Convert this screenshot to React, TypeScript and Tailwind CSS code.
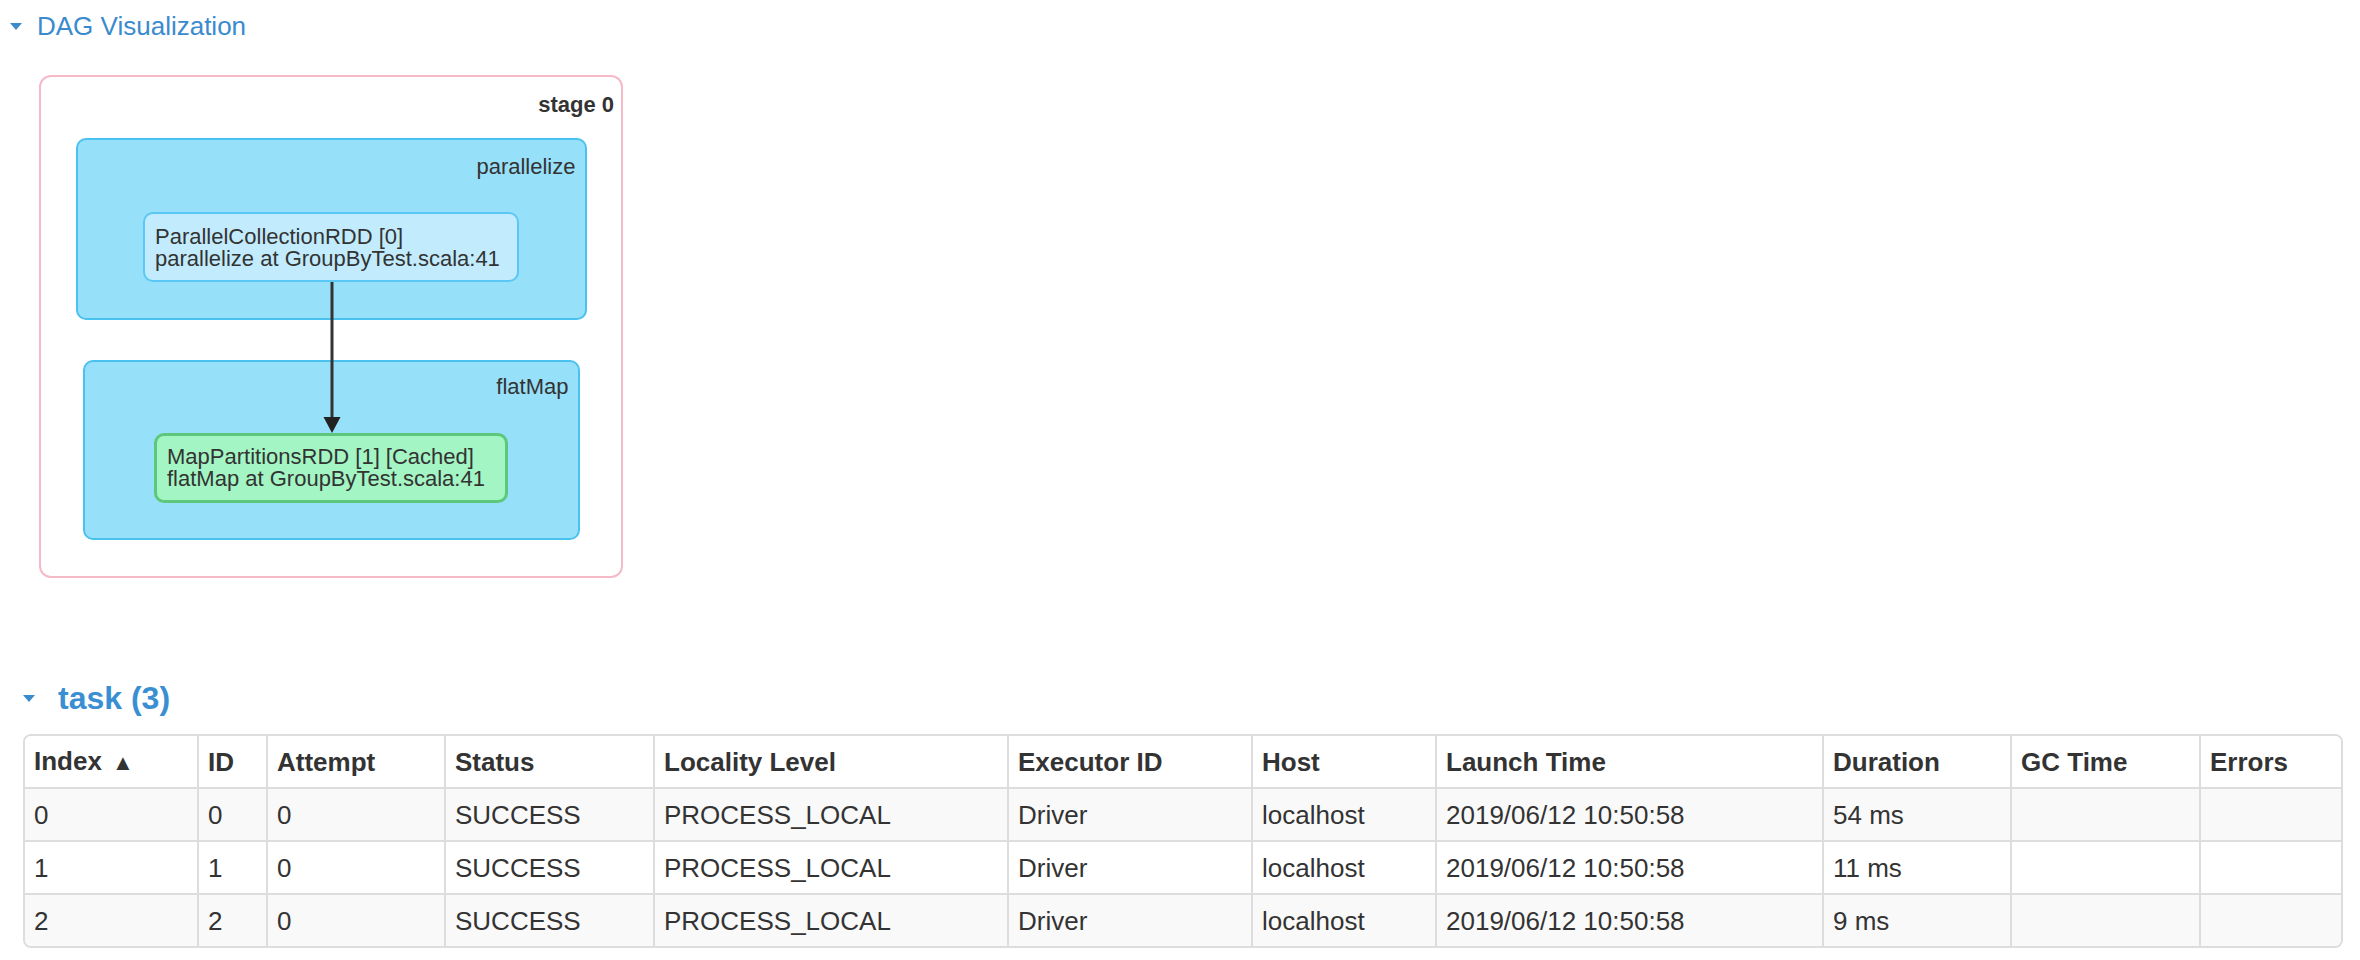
import React from "react";

const headers = [
  "Index",
  "ID",
  "Attempt",
  "Status",
  "Locality Level",
  "Executor ID",
  "Host",
  "Launch Time",
  "Duration",
  "GC Time",
  "Errors",
];

const colWidths = [
  "w-[172px]",
  "w-[69px]",
  "w-[178px]",
  "w-[209px]",
  "w-[354px]",
  "w-[244px]",
  "w-[184px]",
  "w-[387px]",
  "w-[188px]",
  "w-[189px]",
  "w-[142px]",
];

const rows = [
  ["0", "0", "0", "SUCCESS", "PROCESS_LOCAL", "Driver", "localhost", "2019/06/12 10:50:58", "54 ms", "", ""],
  ["1", "1", "0", "SUCCESS", "PROCESS_LOCAL", "Driver", "localhost", "2019/06/12 10:50:58", "11 ms", "", ""],
  ["2", "2", "0", "SUCCESS", "PROCESS_LOCAL", "Driver", "localhost", "2019/06/12 10:50:58", "9 ms", "", ""],
];

function Caret() {
  return (
    <span className="inline-block h-0 w-0 border-l-[6px] border-r-[6px] border-t-[7px] border-l-transparent border-r-transparent border-t-[#3a8bcd]" />
  );
}

export default function App() {
  return (
    <div className="min-h-[960px] w-[2360px] bg-white font-['Liberation_Sans',Arial,sans-serif] text-[#333]">
      {/* DAG heading */}
      <div className="pt-[8px]">
        <div className="flex h-[37px] items-center">
          <span className="ml-[10px] flex items-center">
            <Caret />
          </span>
          <span className="ml-[15px] text-[26px] leading-[37px] text-[#3a8bcd]">DAG Visualization</span>
        </div>
      </div>

      {/* Stage box */}
      <div className="relative ml-[39px] mt-[30px] flex h-[503px] w-[584px] flex-col items-center rounded-[12px] border-2 border-[#f5b9c8] bg-white">
        <div className="self-end pr-[7px] pt-[16px] text-[22px] font-bold leading-[24px] text-[#333]">stage 0</div>

        {/* parallelize cluster */}
        <div className="mt-[21px] flex h-[182px] w-[511px] flex-col items-center rounded-[10px] border-2 border-[#4ac2ef] bg-[#97e0f9]">
          <div className="self-end pr-[9px] pt-[15px] text-[22px] leading-[24px] text-[#333]">parallelize</div>
          <div className="mt-[33px] h-[70px] w-[376px] rounded-[10px] border-2 border-[#5bc7f4] bg-[#c2ecfd] pl-[10px] pt-[12px] text-[22px] leading-[22px] text-[#333]">
            <div className="whitespace-nowrap">ParallelCollectionRDD [0]</div>
            <div className="whitespace-nowrap">parallelize at GroupByTest.scala:41</div>
          </div>
        </div>

        {/* flatMap cluster */}
        <div className="mt-[40px] flex h-[180px] w-[497px] flex-col items-center rounded-[10px] border-2 border-[#4ac2ef] bg-[#97e0f9]">
          <div className="self-end pr-[9px] pt-[13px] text-[22px] leading-[24px] text-[#333]">flatMap</div>
          <div className="mt-[34px] h-[70px] w-[354px] rounded-[10px] border-[3px] border-[#5dc77c] bg-[#a3f5c3] pl-[10px] pt-[10px] text-[22px] leading-[22px] text-[#333]">
            <div className="whitespace-nowrap">MapPartitionsRDD [1] [Cached]</div>
            <div className="whitespace-nowrap">flatMap at GroupByTest.scala:41</div>
          </div>
        </div>

        {/* edge arrow */}
        <svg className="absolute left-[281px] top-[205px]" width="20" height="151" viewBox="0 0 20 151">
          <line x1="10" y1="0" x2="10" y2="136" stroke="#333" strokeWidth="3" />
          <polygon points="1.5,135 18.5,135 10,151" fill="#222" />
        </svg>
      </div>

      {/* task heading */}
      <div className="mt-[100px] flex h-[40px] items-center">
        <span className="ml-[23px] flex items-center">
          <Caret />
        </span>
        <span className="ml-[23px] text-[32px] font-bold leading-[40px] text-[#3a8fd2]">task (3)</span>
      </div>

      {/* table */}
      <div className="ml-[23px] mt-[16px] w-[2320px] overflow-hidden rounded-[8px] border-2 border-[#dddddd]">
        <table className="w-[2316px] table-fixed border-separate border-spacing-0">
          <colgroup>
            {colWidths.map((w, i) => (
              <col key={i} className={w} />
            ))}
          </colgroup>
          <thead>
            <tr className="h-[51px] bg-white">
              {headers.map((h, i) => (
                <th
                  key={h}
                  className={
                    "h-[51px] px-[9px] py-0 text-left align-middle text-[26px] font-bold leading-[30px] text-[#333] whitespace-nowrap " +
                    (i > 0 ? "border-l-2 border-[#dddddd]" : "")
                  }
                >
                  {h}
                  {i === 0 && <span className="ml-[10px] text-[22px] font-normal">▲</span>}
                </th>
              ))}
            </tr>
          </thead>
          <tbody>
            {rows.map((r, ri) => (
              <tr key={ri} className={"h-[53px] " + (ri % 2 === 0 ? "bg-[#f9f9f9]" : "bg-white")}>
                {r.map((c, ci) => (
                  <td
                    key={ci}
                    className={
                      "h-[53px] border-t-2 border-[#dddddd] px-[9px] py-0 text-left align-middle text-[26px] leading-[30px] text-[#333] whitespace-nowrap " +
                      (ci > 0 ? "border-l-2" : "")
                    }
                  >
                    {c}
                  </td>
                ))}
              </tr>
            ))}
          </tbody>
        </table>
      </div>
    </div>
  );
}
